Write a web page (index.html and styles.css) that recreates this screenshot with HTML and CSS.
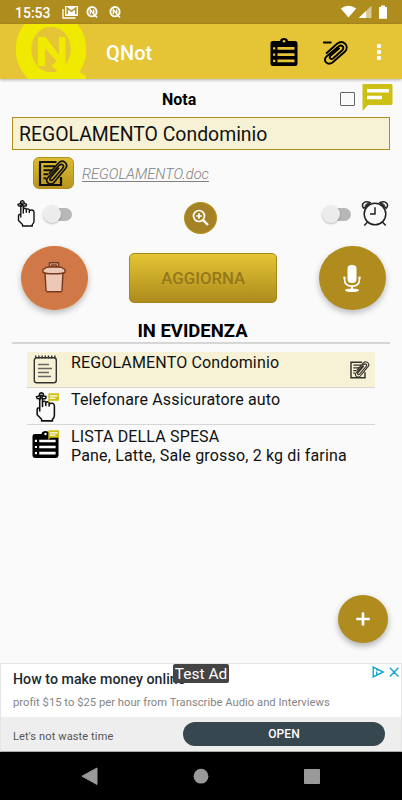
FILE: index.html
```html
<!DOCTYPE html>
<html lang="it">
<head>
<meta charset="utf-8">
<title>QNot</title>
<link rel="stylesheet" href="styles.css">
</head>
<body>
<svg class="defs" aria-hidden="true">
  <defs>
    <symbol id="mark" viewBox="0 0 12 12">
      <ellipse cx="6" cy="5.7" rx="4.6" ry="4.7" fill="none" stroke="#fff" stroke-width="1.9"/>
      <path d="M4.300 8.200V3.600L7.700 8V3.400M7.300 7.500l3.800 4" fill="none" stroke="#fff" stroke-width="1.400"/>
    </symbol>
    <symbol id="checklist" viewBox="0 0 28 28">
      <path fill-rule="evenodd" d="M3 3h7c0-2 2-3 4-3s4 1 4 3h7q2.500 0 2.500 2.500V25.500q0 2.500-2.500 2.500H3Q.5 28 .5 25.500V5.500Q.5 3 3 3Z"/>
      <circle class="hole" cx="14" cy="3.200" r="1.300"/>
      <path class="hole" d="M7.500 9h17v2.700h-17zM7.500 15.300h17V18h-17zM7.500 21.600h17v2.700h-17zM3 9.200h2.200v2.200H3zM3 15.500h2.200v2.200H3zM3 21.800h2.200V24H3z"/>
    </symbol>
    <symbol id="hand" viewBox="0 0 18 27">
      <g fill="none" stroke="#111" stroke-width="1.400" stroke-linecap="round" stroke-linejoin="round">
        <path d="M3.800 17V6.200q0-1.200 1.200-1.200t1.300 1.200V13M6.300 9q1.700-1.500 3 .2v3M9.300 9.500q2-1.500 3 .5v2.500M12.300 10.500q4.500-1.500 4.700 2V21q0 2.500-1.700 3.500v1.500H5.500V24.500L1.500 20.500v-5q.2-1.500 2.300-1.300"/>
        <path d="M4.500 6.300 1.500 5.800.900 4.300l2.400-.8.500-2.200 1.600-.6 1.500.8.300 2 2.200.6-.2 1.700-2.700.5"/>
        <circle cx="5.200" cy="3.900" r="1"/>
      </g>
    </symbol>
    <symbol id="docclip" viewBox="0 0 30 27">
      <path d="M18 2H1.500V25H22.500V17" fill="none" stroke="#111" stroke-width="2.200"/>
      <path d="M5 6.300h11.500M5 10.300h8.500M5 14.300h5M5 18.300h2.500" stroke="#111" stroke-width="1.900"/>
      <path d="M11 13 20 3C24.500-1.500 30.500 4 27 8.500L15.500 22.500C12 26.500 6 22 9 18L20.500 5.500C23.500 3 26.500 5.500 24 8.500L14.500 19.500C12.500 21.500 10.500 19.500 12 17.500L20 8.500" fill="none" stroke="#111" stroke-width="1.700" stroke-linecap="round"/>
    </symbol>
    <symbol id="bubble" viewBox="0 0 32 28">
      <path d="M2 1h28q1.500 0 1.500 1.500v18q0 1.500-1.500 1.500H7l-5.500 6V2Z" fill="#cdbf14"/>
      <path d="M6 7.700h22M6 14.500h15" stroke="#fff" stroke-width="3.500"/>
    </symbol>
  </defs>
</svg>
<div class="screen">
  <header class="status">
    <span class="clock">15:53</span>
    <svg class="mail" viewBox="0 0 16 13"><path d="M1 3v9h12.500" fill="none" stroke="#fff" stroke-width="1.300"/><path d="M3 0h13v10H3z" fill="#fff"/><path d="M5.200 8.300V2l4.300 3.300L13.800 2v6.300" fill="none" stroke="#ae8c1e" stroke-width="1.500"/></svg>
    <svg class="mini"><use href="#mark"/></svg>
    <svg class="mini second"><use href="#mark"/></svg>
    <svg class="signals" viewBox="0 0 48 14">
      <path d="M.8 3.500Q8.500-2.200 16.200 3.500L8.500 12.500Z" fill="#fff"/>
      <path d="M31.500.8V13H18.800Z" fill="#d9c898"/><path d="M26 6V13h-7.200Z" fill="#fff"/>
      <path d="M39 2h2V.6h4V2h2v11.700h-8z" fill="#fff"/>
    </svg>
  </header>
  <div class="appbar">
    <svg class="logo" viewBox="0 0 72 55">
      <ellipse cx="35" cy="25.500" rx="27.500" ry="30.500" fill="none" stroke="#f0ea00" stroke-width="15.500"/>
      <path d="M39 45 35.500 42 40 38 47 36 51 41 70 52V59H54Z" fill="#f0ea00"/>
      <path d="M22 13h7.500L43 31V13h6.500v26H42L29 24v18h-7Z" fill="#f0ea00"/>
    </svg>
    <h1>QNot</h1>
    <svg class="bar-list"><use href="#checklist"/></svg>
    <svg class="bar-clip" viewBox="-1 -1 27 26"><g fill="none" stroke="#000" stroke-width="1.900" stroke-linecap="round"><path d="M.8 1.500h7M3.700 12 14 2.800C20-2 27 5 22 10.500L9.500 21.500C4.500 25-.5 19.500 3.500 15.500L15.500 5.500C19 3 22 6.500 19 9.500L10 17.500C7.800 19 5.500 16.500 7.500 14.700L16 7.500"/></g></svg>
    <svg class="dots" viewBox="0 0 6 18"><g fill="#fff"><circle cx="3" cy="3" r="2.300"/><circle cx="3" cy="9" r="2.300"/><circle cx="3" cy="15" r="2.300"/></g></svg>
  </div>
  <main>
    <div class="note-head">
      <span class="note-label">Nota</span>
      <span class="check"></span>
      <svg class="talk"><use href="#bubble"/></svg>
    </div>
    <div class="field">REGOLAMENTO Condominio</div>
    <div class="attach">
      <div class="attach-btn"><svg><use href="#docclip"/></svg></div>
      <a>REGOLAMENTO.doc</a>
    </div>
    <div class="toggles">
      <svg class="remind"><use href="#hand"/></svg>
      <span class="switch"></span>
      <div class="zoom"><svg viewBox="0 0 20 20"><g fill="none" stroke="#fff" stroke-width="1.700"><circle cx="8" cy="8" r="5.500"/><path d="M8 5.200v5.600M5.200 8h5.600"/><path d="m12 12 5 5" stroke-width="2.400"/></g></svg></div>
      <span class="switch right"></span>
      <svg class="alarm" viewBox="0 0 28 27"><g fill="none" stroke="#222" stroke-width="1.500"><circle cx="14" cy="14" r="10.800"/><path d="M14 7.200V14H9M6.500 22 3.300 25.500M21.500 22l3.200 3.500"/><path d="M2.800 8.300Q.3 5.500 2.300 3.200T9 2.500ZM25.200 8.300q2.500-2.800.5-5.100T19 2.500Z"/><path d="M4 5.800q.6-2 3.200-2.300M24 5.800q-.6-2-3.200-2.300" stroke-width="1"/></g></svg>
    </div>
    <div class="actions">
      <div class="round delete"><svg viewBox="0 0 24 32"><g fill="#edc8b6" stroke="#74391b" stroke-width="1.400" stroke-linejoin="round"><path d="M7.500 6V1.800h9V6h-2.200V3.900H9.700V6Z"/><path d="M3 11.500h18l-1 18q-.2 1.200-1.500 1.200h-13Q4.200 30.700 4 29.500Z"/><path d="M1 11.300V9q0-1 1.700-1.400Q4 6 7 6h10q3 0 4.300 1.600Q23 8 23 9v2.300q-2.500 1.500-11 1.500t-11-1.500Z"/></g></svg></div>
      <div class="update">AGGIORNA</div>
      <div class="round record"><svg viewBox="0 0 18 29"><rect x="4.500" y="1" width="9" height="18" rx="4" fill="#fff"/><path d="M1.500 13v2q0 7.200 7.500 7.200t7.500-7.200v-2M9 22v4M.3 13.700h2.400M15.300 13.700h2.400" fill="none" stroke="#fff" stroke-width="1.700"/><ellipse cx="9" cy="26.300" rx="7" ry="1.800" fill="#fff"/></svg></div>
    </div>
    <h2>IN EVIDENZA</h2>
    <div class="list">
      <div class="item selected">
        <svg class="ico" viewBox="0 0 28 30"><g fill="none" stroke="#333" stroke-width="1.400"><rect x="2.300" y="3.200" width="22" height="25" rx="2.500"/><path d="M3 2.500h21" stroke-width="3" stroke-dasharray="1.400 1.800"/><path d="M6 10h11M6 14h14M6 18h11M6 22h13" stroke="#666"/></g></svg>
        <p>REGOLAMENTO Condominio</p>
        <svg class="small-doc"><use href="#docclip"/></svg>
      </div>
      <div class="item">
        <div class="ico"><svg class="hand-ico"><use href="#hand"/></svg><svg class="badge"><use href="#bubble"/></svg></div>
        <p>Telefonare Assicuratore auto</p>
      </div>
      <div class="item last">
        <div class="ico"><svg class="list-ico"><use href="#checklist"/></svg><svg class="badge"><use href="#bubble"/></svg></div>
        <p>LISTA DELLA SPESA<br><span>Pane, Latte, Sale grosso, 2 kg di farina</span></p>
      </div>
    </div>
    <div class="fab"><svg viewBox="0 0 14 14"><path d="M7 .5v13M.2 7h13.600" stroke="#fff" stroke-width="2.600"/></svg></div>
  </main>
  <section class="ad">
    <div class="ad-top">
      <h3>How to make money online</h3>
      <p>profit $15 to $25 per hour from Transcribe Audio and Interviews</p>
      <span class="test">Test Ad</span>
      <svg class="choices" viewBox="0 0 28 12"><g fill="none" stroke="#12a5cf" stroke-width="1.400"><path d="M1.200 1v10l10-5ZM4.700 5.500v3M4.700 3.400v1M17.800 1.800l8.600 8.600M26.400 1.800l-8.600 8.600"/></g></svg>
    </div>
    <div class="ad-bottom"><span>Let's not waste time</span><b>OPEN</b></div>
  </section>
  <nav>
    <svg viewBox="0 0 402 48"><g fill="#999"><path d="M97 16v16.500L82 24.200Z" stroke="#999" stroke-linejoin="round"/><circle cx="201" cy="24.200" r="7.400"/><rect x="304" y="17" width="16" height="15" rx=".8"/></g></svg>
  </nav>
</div>
</body>
</html>
```
FILE: styles.css
```css
* { box-sizing: border-box; }
body { margin: 0; font-family: Roboto, "Liberation Sans", sans-serif; color: #111; }
h1, h2, h3, p { margin: 0; }
svg { display: block; flex: none; }
.defs { position: absolute; width: 0; height: 0; }
.screen { width: 402px; height: 800px; display: flex; flex-direction: column; background: #fafafa; overflow: hidden; }

.status { height: 24px; background: #ae8c1e; display: flex; align-items: center; padding: 0 14px 0 15px; color: #fff; }
.clock { width: 47px; font-size: 14px; font-weight: 500; line-height: 24px; padding-top: 1px; white-space: nowrap; }
.mail { width: 16px; height: 13px; }
.mini { width: 12px; height: 12px; margin-left: 8px; }
.mini.second { margin-left: 11px; }
.signals { width: 48px; height: 14px; margin-left: auto; }

.appbar { height: 55px; background: #e5c536; display: flex; align-items: center; padding: 0 19px 0 16px; box-shadow: 0 1px 3px rgba(0,0,0,.3); position: relative; }
.logo { width: 72px; height: 55px; }
h1 { width: 164px; margin-left: 18px; padding-top: 2px; font-size: 20px; font-weight: 500; color: #fff; letter-spacing: .1px; }
.bar-list { width: 28px; height: 28px; --hole: #e5c536; }
.hole { fill: var(--hole, #fafafa); }
.bar-clip { width: 27px; height: 26px; margin: 3px 0 0 24px; }
.dots { width: 6px; height: 18px; margin-left: auto; margin-right: 1px; }

main { flex: 1; position: relative; padding: 0 12px; }
.note-head { height: 38px; display: flex; align-items: center; padding-top: 2px; }
.note-label { width: 328px; flex: none; padding-left: 150px; font-size: 16px; font-weight: 700; color: #000; }
.check { width: 15px; height: 14px; flex: none; border: 1.500px solid #666; border-radius: 1px; }
.talk { width: 32px; height: 28px; margin: -5px 0 0 6px; }
.field { height: 33px; width: 378px; border: 1px solid #ad8b1d; background: #f7f2d5; padding-left: 6px; font-size: 19.400px; line-height: 33px; white-space: nowrap; }
.attach { height: 32px; margin: 7px 0 0 21px; display: flex; align-items: center; }
.attach-btn { width: 41px; height: 32px; border: 1px solid #b08f1c; border-radius: 6px; background: linear-gradient(#dcbd31, #b6941f); padding: 2px 4px; }
.attach-btn svg { width: 31px; height: 27px; }
.attach a { margin-left: 8px; font-size: 14.650px; font-weight: 300; font-style: italic; color: #808080; text-decoration: underline; text-decoration-thickness: 1px; text-underline-offset: 2px; padding-top: 1px; }
.toggles { height: 48px; margin-top: 10px; display: flex; align-items: flex-start; padding-left: 5px; }
.remind { width: 18px; height: 27px; margin-top: 1px; }
.switch { position: relative; width: 30px; height: 20px; margin: 5px 0 0 7px; }
.switch::before { content: ""; display: block; width: 27px; height: 13px; margin: 4px 0 0 3px; border-radius: 7px; background: #b7b7b7; }
.switch::after { content: ""; position: absolute; left: 1px; top: 1px; width: 18px; height: 18px; border-radius: 50%; background: #ececec; box-shadow: 0 1px 2px rgba(0,0,0,.25); }
.zoom { width: 33px; height: 32px; margin: 3px 0 0 112px; border-radius: 50%; background: #a58226; border: 1px solid #b4931e; display: flex; align-items: center; justify-content: center; }
.zoom svg { width: 20px; height: 20px; }
.switch.right { margin-left: 104px; }
.alarm { width: 28px; height: 27px; margin: 1px 0 0 10px; }
.actions { height: 64px; margin: -1px 4px 0 8.500px; display: flex; align-items: center; justify-content: space-between; }
.round { width: 67px; height: 64px; border-radius: 50%; display: flex; align-items: center; justify-content: center; box-shadow: 0 3px 6px rgba(0,0,0,.26); }
.delete { background: #d07848; border: 1px solid #d97831; }
.delete svg { width: 24px; height: 32px; margin-top: -2px; }
.record { background: #af8c1d; }
.record svg { width: 18px; height: 29px; margin-right: 2px; }
.update { width: 148px; height: 50px; margin-top: -1px; border: 1px solid #a8861a; border-radius: 5px; background: linear-gradient(#e4c535, #ad8b1d); display: flex; align-items: center; justify-content: center; font-size: 16.800px; font-weight: 500; color: #94781c; }
h2 { height: 34px; padding-top: 11px; border-bottom: 2px solid #d6d6d6; text-align: center; font-size: 18.500px; line-height: 21px; font-weight: 700; color: #000; width: 378px; padding-right: 17px; }
.list { margin: 8px 0 0 15px; width: 348px; }
.item { height: 37px; border-bottom: 1px solid #d6d6d6; display: flex; align-items: flex-start; padding: 2px 5px 0; }
.item.selected { background: #f7f2d5; height: 36px; padding-top: 0; }
.item.last { border-bottom: 0; }
.item p { flex: 1; margin-left: 11px; font-size: 16px; line-height: 18.500px; letter-spacing: .15px; white-space: nowrap; padding-top: 1px; }
.item.last span { letter-spacing: .17px; }
.selected p { padding-top: 2px; }
.ico { position: relative; width: 28px; height: 31px; margin-top: 2px; }
.hand-ico { width: 21px; height: 30px; margin: 0 0 0 3px; }
.list-ico { width: 27px; height: 29px; margin: 1px 0 0 0; }
.badge { position: absolute; right: 0; top: 1px; width: 13px; height: 10px; }
.small-doc { width: 20px; height: 20px; margin-top: 8px; opacity: .85; }
.fab { position: absolute; left: 338px; top: 516px; width: 50px; height: 48px; border-radius: 50%; background: #af8c1d; box-shadow: 0 3px 6px rgba(0,0,0,.3); display: flex; align-items: center; justify-content: center; }
.fab svg { width: 14px; height: 14px; }

.ad { height: 89px; border: 1px solid #e4e4e4; border-bottom-color: #aaa; background: #fff; }
.ad-top { height: 53px; position: relative; padding: 6px 0 0 12px; }
h3 { font-size: 14.200px; line-height: 18px; font-weight: 500; color: #1c2b33; letter-spacing: .03px; }
.ad-top p { margin-top: 7px; font-size: 11.200px; line-height: 16px; color: #858585; letter-spacing: .03px; white-space: nowrap; }
.test { position: absolute; left: 172px; top: 0; width: 56px; height: 19px; border-radius: 2px; background: #444; color: #fff; font-size: 15.500px; line-height: 20px; text-align: center; }
.choices { position: absolute; right: 1px; top: 2px; width: 28px; height: 12px; }
.ad-bottom { height: 34px; background: #eee; display: flex; align-items: center; padding: 0 16px 0 12px; font-size: 11px; color: #555; letter-spacing: .13px; justify-content: space-between; }
.ad-bottom span { padding-top: 4px; }
.ad-bottom b { width: 202px; height: 24px; border-radius: 12px; background: #37474f; color: #fff; font-size: 12px; font-weight: 500; line-height: 24px; text-align: center; letter-spacing: .1px; }
nav { height: 48px; background: #000; }
nav svg { width: 402px; height: 48px; }
```
